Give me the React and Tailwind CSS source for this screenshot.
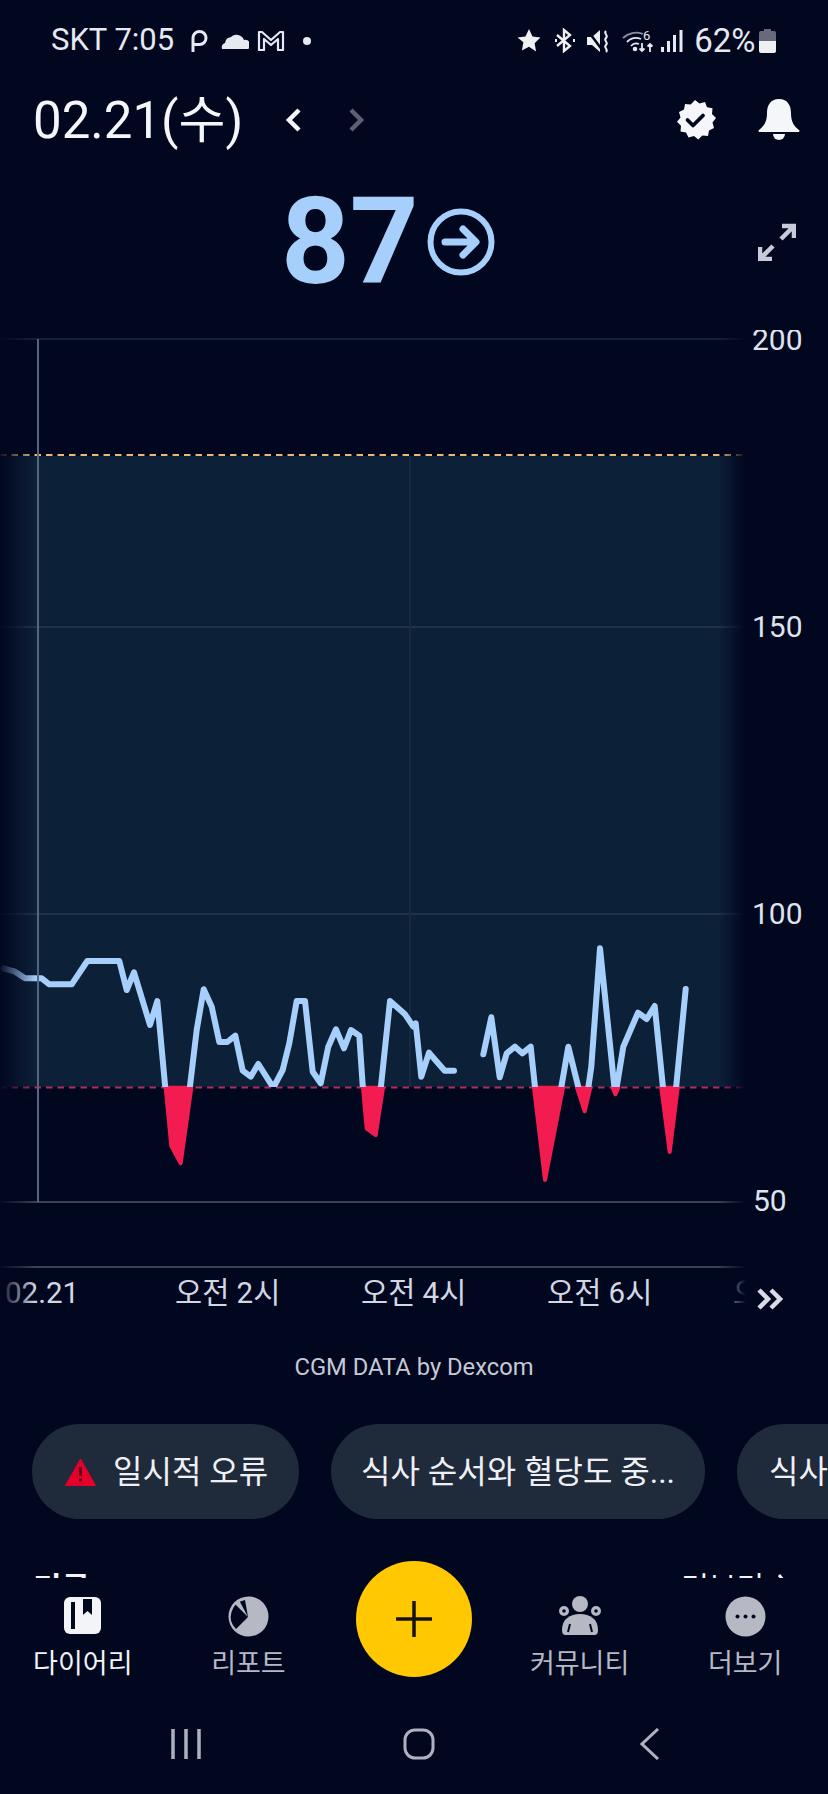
const scale3 = ([x, y]) => [x / 3, y / 3 + 920];
const scale4 = ([x, y]) => [x / 3 + 414, y / 3 + 920];
const toPoints = (list) => list.map(([x, y]) => `${x.toFixed(1)},${y.toFixed(1)}`).join(' ');

// traced from the graph, first run before the sensor gap
const firstRun = [
  ...[[10, 145], [45, 155], [75, 175], [125, 175], [148, 193], [215, 193], [262, 123], [358, 123], [380, 210], [402, 157], [450, 315], [472, 243], [512, 680], [542, 733], [590, 330], [611, 208], [635, 260], [658, 366], [682, 366], [706, 347], [728, 452], [752, 470], [775, 432], [820, 503], [848, 450], [868, 370], [890, 243], [915, 243], [938, 455], [962, 490], [985, 380], [1008, 328], [1032, 385], [1053, 330], [1078, 347], [1097, 628], [1127, 648], [1170, 243], [1215, 283], [1240, 320]].map(scale3),
  ...[[5, 310], [22, 470], [45, 398], [92, 452], [120, 452]].map(scale4),
];
const secondRun = [[208, 403], [232, 292], [257, 472], [278, 400], [303, 380], [325, 400], [350, 380], [393, 785], [463, 380], [512, 578], [532, 440], [558, 85], [604, 527], [628, 380], [672, 278], [698, 297], [722, 258], [767, 700], [815, 207]].map(scale4);

const dips = [
  [[497, 503], [514, 678], [542, 730], [574, 503]].map(scale3),
  [[1089, 503], [1100, 626], [1127, 645], [1149, 503]].map(scale3),
  [[360, 503], [393, 780], [447, 503]].map(scale4),
  [[489, 503], [512, 574], [529, 503]].map(scale4),
  [[596, 503], [604, 523], [613, 503]].map(scale4),
  [[742, 503], [767, 696], [791, 503]].map(scale4),
];

const BG = '#01071f';

const Chart = () => (
  <svg className="block w-[828px] h-[1000px]" viewBox="0 330 828 1000">
    <defs>
      <linearGradient id="fadeLeft" x1="0" x2="1" y1="0" y2="0">
        <stop offset="0" stopColor={BG} stopOpacity="0.95" />
        <stop offset="1" stopColor={BG} stopOpacity="0" />
      </linearGradient>
      <linearGradient id="fadeRight" x1="0" x2="1" y1="0" y2="0">
        <stop offset="0" stopColor={BG} stopOpacity="0" />
        <stop offset="1" stopColor={BG} stopOpacity="1" />
      </linearGradient>
      <clipPath id="above"><rect x="0" y="330" width="828" height="757" /></clipPath>
    </defs>

    <rect x="0" y="456" width="745" height="631" fill="#0c2038" />
    <line x1="0" x2="745" y1="339" y2="339" stroke="#171f36" strokeWidth="2" />
    <line x1="0" x2="745" y1="627" y2="627" stroke="#1f3249" strokeWidth="2" />
    <line x1="0" x2="745" y1="914" y2="914" stroke="#1f3249" strokeWidth="2" />
    <line x1="0" x2="745" y1="1202" y2="1202" stroke="#3a4256" strokeWidth="2" />
    <line x1="0" x2="745" y1="1267" y2="1267" stroke="#3a4256" strokeWidth="2" />
    <line x1="410" x2="410" y1="456" y2="1087" stroke="#16293f" strokeWidth="2" />

    <line x1="0" x2="745" y1="455" y2="455" stroke="#ecb872" strokeWidth="2" strokeDasharray="6.5 5" />
    <line x1="0" x2="745" y1="1087.5" y2="1087.5" stroke="#b42a60" strokeWidth="2" strokeDasharray="6.5 5" />

    {dips.map((dip, i) => (
      <polygon key={i} points={toPoints(dip)} fill="#f21c50" stroke="#f21c50" strokeWidth="4" strokeLinejoin="round" />
    ))}
    <g clipPath="url(#above)" fill="none" stroke="#a6d0fb" strokeWidth="6" strokeLinejoin="round" strokeLinecap="round">
      <polyline points={toPoints(firstRun)} />
      <polyline points={toPoints(secondRun)} />
    </g>

    <g fill="#d3d7e2" fontSize="29.5">
      <text x="5" y="1303">02.21</text>
      <text x="175" y="1303">오전 2시</text>
      <text x="361" y="1303">오전 4시</text>
      <text x="547" y="1303">오전 6시</text>
      <text x="733" y="1303">오전 8시</text>
    </g>

    <rect x="0" y="330" width="36" height="1000" fill="url(#fadeLeft)" />
    <rect x="718" y="330" width="28" height="1000" fill="url(#fadeRight)" />
    <rect x="746" y="330" width="82" height="1000" fill={BG} />
    <line x1="38" x2="38" y1="339" y2="1202" stroke="#55647f" strokeWidth="2" />

    <g fill="#dfe3ec" fontSize="30">
      <text x="752" y="350">200</text>
      <text x="752" y="637">150</text>
      <text x="752" y="924">100</text>
      <text x="753" y="1211">50</text>
    </g>
    <path d="M759 1290l9 9-9 9M771 1290l9 9-9 9" fill="none" stroke="#d9dce6" strokeWidth="4.5" />
  </svg>
);

const StatusBar = () => (
  <div className="h-[80px] flex items-center pl-[51px] pt-[1px] text-[31px] text-[#e6e9ef]">
    <span>SKT 7:05</span>
    <svg className="ml-[17px]" width="18" height="22" viewBox="0 0 18 22" fill="none" stroke="#e6e9ef" strokeWidth="3">
      <path d="M2 22V8a6.500 6.500 0 1 1 6.500 6.500H2" />
    </svg>
    <svg className="ml-[12px]" width="28" height="16" viewBox="0 0 28 16" fill="#e6e9ef">
      <path d="M1 16a5 5 0 0 1 3-6 7 7 0 0 1 6-6 8 8 0 0 1 13 3 5 5 0 0 1 4 9z" />
    </svg>
    <svg className="ml-[8px]" width="28" height="21" viewBox="0 0 28 21" fill="none" stroke="#e6e9ef" strokeWidth="2.2" strokeLinejoin="round">
      <path d="M2 20V2h3l9 8 9-8h3v18h-5V9l-7 6-7-6v11z" />
    </svg>
    <span className="ml-[18px] w-[8px] h-[8px] rounded-full bg-[#e6e9ef]" />

    <svg className="ml-[205px]" width="26" height="25" viewBox="0 0 24 24" fill="#eef0f2">
      <path d="M12 1l3.4 7.2 7.6 1-5.6 5.4 1.4 7.9L12 18l-6.800 3.500 1.400-7.900L1 9.200l7.600-1z" />
    </svg>
    <svg className="ml-[12px]" width="22" height="25" viewBox="0 0 22 25" fill="none" stroke="#eef0f2" strokeWidth="2.4">
      <path d="M3 7l13 11-6 5V2l6 5L3 18" />
      <path d="M1 12.500h2M19 12.500h2" strokeWidth="3" />
    </svg>
    <svg className="ml-[11px]" width="24" height="24" viewBox="0 0 24 24">
      <path d="M0 8h5l8-7v22l-8-7H0z" fill="#eef0f2" />
      <path d="M1 2l15 20" stroke={BG} strokeWidth="2.500" />
      <path d="M19 2c-3 3 3 4 0 7s3 4 0 7 3 4 0 7" fill="none" stroke="#eef0f2" strokeWidth="2" />
    </svg>
    <svg className="ml-[11px]" width="32" height="24" viewBox="0 0 32 24" fill="none" stroke="#e6e9ef" strokeWidth="1.800">
      <path d="M1 9a19 19 0 0 1 20-4" stroke="#8c909f" />
      <path d="M5 13a13 13 0 0 1 14-3" />
      <path d="M9 17a7 7 0 0 1 8-2" />
      <circle cx="13" cy="20" r="1.400" fill="#e6e9ef" />
      <path d="M20 14v8M17.500 19.500l2.500 2.500 2.500-2.500M28 23v-8M25.500 17.500l2.500-2.500 2.500 2.500" />
      <text x="21" y="11" fontSize="13" fill="#e6e9ef" stroke="none">6</text>
    </svg>
    <svg className="ml-[7px]" width="22" height="24" viewBox="0 0 22 24" fill="#e6e9ef">
      <rect x="0" y="18" width="3" height="5" />
      <rect x="6" y="12" width="3" height="11" />
      <rect x="12" y="6" width="3" height="17" />
      <rect x="18.500" y="1" width="3" height="22" />
    </svg>
    <span className="ml-[11px] text-[33px]">62%</span>
    <svg className="ml-[4px]" width="17" height="24" viewBox="0 0 17 24">
      <path d="M5 0h7v2h3a2 2 0 0 1 2 2v8H0V4a2 2 0 0 1 2-2h3z" fill="#676a7c" />
      <path d="M0 12h17v10a2 2 0 0 1-2 2H2a2 2 0 0 1-2-2z" fill="#eef0f2" />
    </svg>
  </div>
);

const Header = () => (
  <div className="h-[80px] flex items-center pl-[33px] pr-[28px]">
    <span className="text-[51px] text-[#f4f6fa] leading-none">02.21(수)</span>
    <svg className="ml-[42px]" width="16" height="26" viewBox="0 0 16 26" fill="none" stroke="#f4f6fa" strokeWidth="4.500">
      <path d="M14 3L4 13l10 10" />
    </svg>
    <svg className="ml-[48px]" width="16" height="26" viewBox="0 0 16 26" fill="none" stroke="#5b6072" strokeWidth="4.500">
      <path d="M2 3l10 10L2 23" />
    </svg>
    <svg className="ml-auto" width="42" height="42" viewBox="0 0 42 42">
      <path d="M21 1l4.500 3.500 5.500-1.500 2 5.300 5.500 1-.5 5.700 4 4-3.500 4.500 1.500 5.500-5 2.500-1 5.500-5.700-.5-4 4-4.300-3.500-5.500 1.500-2.500-5-5.500-1 .5-5.700-4-4 3.500-4.300-1.500-5.500 5-2.500 1-5.500 5.700.5z" fill="#f4f6fa" />
      <path d="M13.500 21l5.500 5.500 10-10" fill="none" stroke={BG} strokeWidth="3.800" strokeLinecap="round" strokeLinejoin="round" />
    </svg>
    <svg className="ml-[42px]" width="42" height="42" viewBox="0 0 42 42" fill="#f4f6fa">
      <path d="M21 0c9 0 12 7 12 14 0 9 3 13 8 17 1 1 .5 2-1 2H2c-1.500 0-2-1-1-2 5-4 8-8 8-17C9 7 12 0 21 0z" />
      <path d="M15 35h12a6 6 0 0 1-12 0z" />
    </svg>
  </div>
);

const Reading = () => (
  <div className="h-[170px] flex items-center pl-[281px] pr-[32px] pb-[6px]">
    <span className="text-[120px] font-bold leading-none text-[#a6d0fb]">87</span>
    <svg className="ml-[8px]" width="68" height="68" viewBox="0 0 68 68" fill="none" stroke="#a6d0fb">
      <circle cx="34" cy="34" r="30.500" strokeWidth="6" />
      <path d="M18 34h29M36 21l13 13-13 13" strokeWidth="7" strokeLinecap="round" strokeLinejoin="round" />
    </svg>
    <svg className="ml-auto" width="38" height="38" viewBox="0 0 38 38" fill="none" stroke="#c9ccd8" strokeWidth="4.500">
      <path d="M24 3h12v12M36 3L23 16M14 36H2V24M2 36l13-13" />
    </svg>
  </div>
);

const WarningIcon = () => (
  <svg width="31" height="28" viewBox="0 0 31 28">
    <path d="M15.500 1L30.500 27.500H.5z" fill="#e4002b" stroke="#e4002b" strokeLinejoin="round" />
    <path d="M15.500 9v9M15.500 20.500v3" stroke="#5c0a1c" strokeWidth="3" />
  </svg>
);

const chipClass = 'h-[95px] shrink-0 flex items-center rounded-full bg-[#1f2a3a] text-[32px] text-[#eef0f5] whitespace-nowrap';

const Chips = () => (
  <div className="h-[95px] flex gap-[32px] pl-[32px] overflow-hidden">
    <div className={`${chipClass} w-[267px] pl-[33px]`}>
      <WarningIcon />
      <span className="ml-[17px]">일시적 오류</span>
    </div>
    <div className={`${chipClass} w-[374px] justify-center`}>식사 순서와 혈당도 중...</div>
    <div className={`${chipClass} w-[300px] pl-[32px]`}>식사 습관</div>
  </div>
);

const DiaryIcon = () => (
  <svg width="38" height="38" viewBox="0 0 38 38">
    <rect x="0" y="0" width="37" height="37" rx="6" fill="#f2f4f8" />
    <rect x="7" y="5" width="4" height="27" fill={BG} />
    <path d="M19 2h9v16l-4.500-4-4.500 4z" fill={BG} />
  </svg>
);

const ReportIcon = () => (
  <svg width="41" height="41" viewBox="0 0 41 41">
    <circle cx="20.500" cy="20.500" r="20" fill="#b6b9c4" />
    <path d="M20 21L17 4A17 17 0 0 0 8 33z" fill={BG} />
    <path d="M20 21L7 8l4-4z" fill="#b6b9c4" />
  </svg>
);

const CommunityIcon = () => (
  <svg width="42" height="40" viewBox="0 0 42 40" fill="#b6b9c4">
    <circle cx="21" cy="8" r="8" />
    <circle cx="5" cy="15" r="5" />
    <circle cx="37" cy="15" r="5" />
    <circle cx="5" cy="15" r="1.800" fill={BG} />
    <circle cx="37" cy="15" r="1.800" fill={BG} />
    <path d="M3 34c0-11 8-16 18-16s18 5 18 16c0 3-1 5-4 5H7c-3 0-4-2-4-5z" />
    <path d="M11 28l-2 8M31 28l2 8" stroke={BG} strokeWidth="2" />
  </svg>
);

const MoreIcon = () => (
  <svg width="41" height="41" viewBox="0 0 41 41">
    <circle cx="20.500" cy="20.500" r="20" fill="#b6b9c4" />
    <circle cx="12.500" cy="20.500" r="2" fill={BG} />
    <circle cx="20.500" cy="20.500" r="2" fill={BG} />
    <circle cx="28.500" cy="20.500" r="2" fill={BG} />
  </svg>
);

const Tab = ({ icon, label, active }) => (
  <div className={`flex flex-col items-center ${active ? 'text-[#f2f4f8]' : 'text-[#b6b9c4]'}`}>
    <div className="h-[42px] flex items-center justify-center">{icon}</div>
    <span className="mt-[9px] text-[27px] leading-[36px]">{label}</span>
  </div>
);

const TabBar = () => (
  <div className="h-[120px] grid grid-cols-5 pt-[17px]">
    <Tab icon={<DiaryIcon />} label="다이어리" active />
    <Tab icon={<ReportIcon />} label="리포트" />
    <div className="relative">
      <div className="absolute left-1/2 top-[-34px] -translate-x-1/2 w-[116px] h-[116px] rounded-full bg-[#ffc800] flex items-center justify-center">
        <svg width="36" height="36" viewBox="0 0 36 36" stroke="#16130a" strokeWidth="3.500">
          <path d="M18 0v36M0 18h36" />
        </svg>
      </div>
    </div>
    <Tab icon={<CommunityIcon />} label="커뮤니티" />
    <Tab icon={<MoreIcon />} label="더보기" />
  </div>
);

const SystemNav = () => (
  <div className="h-[96px] flex items-start pt-[30px]">
    <svg className="ml-[171px]" width="30" height="32" viewBox="0 0 30 32" fill="none" stroke="#aeb2bf" strokeWidth="3.500">
      <path d="M2 1v30M15 1v30M28 1v30" />
    </svg>
    <svg className="ml-[202px]" width="32" height="32" viewBox="0 0 32 32" fill="none" stroke="#aeb2bf" strokeWidth="3">
      <rect x="2" y="2" width="28" height="28" rx="10" />
    </svg>
    <svg className="ml-[205px]" width="20" height="32" viewBox="0 0 20 32" fill="none" stroke="#aeb2bf" strokeWidth="3">
      <path d="M18 1L2 16l16 15" />
    </svg>
  </div>
);

export default function App() {
  return (
    <div className="w-[828px] h-[1794px] overflow-hidden bg-[#01071f] font-[family-name:Roboto,'Noto_Sans_CJK_KR',sans-serif]">
      <StatusBar />
      <Header />
      <Reading />
      <Chart />
      <div className="h-[94px] pt-[22px] text-center text-[23.750px] leading-[30px] text-[#c5c9d6]">CGM DATA by Dexcom</div>
      <Chips />
      <div className="h-[59px] overflow-hidden flex justify-between pl-[33px] pr-[38px] pt-[50px] text-[#f2f4f8]">
        <span className="text-[31px] font-bold leading-[40px]">기록</span>
        <div className="flex items-start -mt-[1px]">
          <span className="text-[30px] leading-[40px]">더보기</span>
          <svg className="ml-[12px] mt-[6px]" width="14" height="24" viewBox="0 0 14 24" fill="none" stroke="#f2f4f8" strokeWidth="3">
            <path d="M3 1l9 11-9 11" />
          </svg>
        </div>
      </div>
      <TabBar />
      <SystemNav />
    </div>
  );
}
